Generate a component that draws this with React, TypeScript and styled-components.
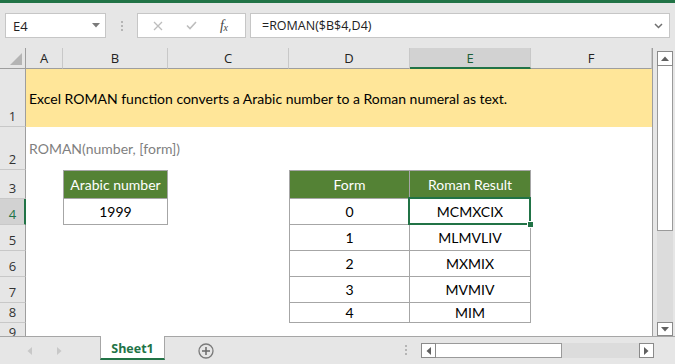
import React from "react";
import styled, { createGlobalStyle, css } from "styled-components";

const UI_FONT = `"Open Sans", "Noto Sans", "Liberation Sans", sans-serif`;
const CELL_FONT = `"Lato", "Liberation Sans", sans-serif`;
const GREEN = "#217346";

const GlobalStyle = createGlobalStyle`
  html, body { margin: 0; padding: 0; }
  body {
    width: 675px;
    height: 364px;
    overflow: hidden;
    background: #e6e6e6;
    font-family: ${UI_FONT};
  }
  * { box-sizing: border-box; }
`;

const Window = styled.div`
  width: 675px;
  height: 364px;
  display: flex;
  flex-direction: column;
  background: #e6e6e6;
  overflow: hidden;
`;

const TitleStripe = styled.div`
  height: 3px;
  flex: none;
  background: ${GREEN};
`;

const FormulaBar = styled.div`
  height: 45px;
  flex: none;
  display: flex;
  align-items: stretch;
  padding: 10px 5px 10px 5px;
`;

const Box = styled.div`
  background: #fff;
  border: 1px solid #c6c6c6;
  display: flex;
  align-items: center;
`;

const NameBox = styled(Box)`
  width: 101px;
  justify-content: space-between;
  padding: 0 5px 0 7px;
  font-size: 13px;
  color: #222;
`;

const BarDivider = styled.div`
  width: 31px;
  display: flex;
  flex-direction: column;
  align-items: center;
  justify-content: center;
  gap: 2px;
`;

const Dot = styled.span`
  width: 2px;
  height: 2px;
  background: #b5b5b5;
`;

const FxBox = styled(Box)`
  width: 109px;
  padding-left: 15px;
`;

const IconSlot = styled.span<{ $w: number }>`
  width: ${(p) => p.$w}px;
  display: flex;
  align-items: center;
  justify-content: flex-start;
`;

const FxLabel = styled.span`
  font-family: "Liberation Serif", "DejaVu Serif", serif;
  font-style: italic;
  font-size: 14px;
  color: #444;
  letter-spacing: -0.5px;
  & > sub {
    font-size: 10px;
    vertical-align: -1px;
  }
`;

const FormulaInput = styled(Box)`
  flex: 1;
  margin-left: 4px;
  padding: 0 6px 0 11px;
  justify-content: space-between;
  font-size: 12.5px;
  color: #222;
`;

const SheetArea = styled.div`
  height: 288px;
  flex: none;
  display: flex;
`;

const SheetGrid = styled.div`
  width: 652px;
  height: 288px;
  overflow: hidden;
  background: #fff;
  display: grid;
  grid-template-columns: 26px 37px 105px 121px 121px 121px 121px;
  grid-template-rows: 21px 58px 43px 29px 26px 26px 26px 26px 20px 20px;
  font-family: ${CELL_FONT};
  font-size: 14px;
  color: #000;
`;

const Corner = styled.div`
  grid-column: 1;
  grid-row: 1;
  background: #e6e6e6;
  border-right: 1px solid #9e9e9e;
  border-bottom: 1px solid #9e9e9e;
  display: flex;
  align-items: flex-end;
  justify-content: flex-end;
  padding: 0 3px 3px 0;
`;

const ColHeader = styled.div<{ $selected?: boolean }>`
  grid-row: 1;
  background: #e6e6e6;
  border-right: 1px solid #c8c8c8;
  border-bottom: 1px solid #9e9e9e;
  display: flex;
  align-items: center;
  justify-content: center;
  font-family: ${UI_FONT};
  font-size: 13px;
  color: #222;
  ${(p) =>
    p.$selected &&
    css`
      background: #d2d2d2;
      border-bottom: 2px solid ${GREEN};
      color: #1b5e37;
      padding-top: 1px;
    `}
`;

const RowHeader = styled.div<{ $selected?: boolean }>`
  grid-column: 1;
  background: #e6e6e6;
  border-right: 1px solid #9e9e9e;
  border-bottom: 1px solid #c8c8c8;
  display: flex;
  align-items: flex-end;
  justify-content: center;
  padding-bottom: 1px;
  font-family: ${UI_FONT};
  font-size: 13px;
  color: #333;
  ${(p) =>
    p.$selected &&
    css`
      background: #d2d2d2;
      border-right: 2px solid ${GREEN};
      color: ${GREEN};
      padding-left: 1px;
    `}
`;

const Banner = styled.div`
  grid-column: 2 / -1;
  grid-row: 2;
  background: #ffe699;
  display: flex;
  align-items: center;
  padding-left: 3px;
  white-space: nowrap;
`;

const Syntax = styled.div`
  grid-column: 2 / -1;
  grid-row: 3;
  display: flex;
  align-items: center;
  padding-left: 3px;
  color: #7f7f7f;
  white-space: nowrap;
`;

const TCell = styled.div<{
  $col: number;
  $row: number;
  $head?: boolean;
  $top?: boolean;
  $left?: boolean;
  $selected?: boolean;
}>`
  grid-column: ${(p) => p.$col};
  grid-row: ${(p) => p.$row};
  position: relative;
  display: flex;
  align-items: center;
  justify-content: center;
  border-right: 1px solid #a6a6a6;
  border-bottom: 1px solid #a6a6a6;
  ${(p) => p.$top && css`border-top: 1px solid #a6a6a6;`}
  ${(p) => p.$left && css`border-left: 1px solid #a6a6a6;`}
  ${(p) =>
    p.$head &&
    css`
      background: #548235;
      color: #fff;
    `}
  ${(p) =>
    p.$selected &&
    css`
      z-index: 2;
      &::before {
        content: "";
        position: absolute;
        left: -2px;
        top: -2px;
        right: -1px;
        bottom: -1px;
        border: 2px solid ${GREEN};
      }
      &::after {
        content: "";
        position: absolute;
        right: -4px;
        bottom: -4px;
        width: 5px;
        height: 5px;
        background: ${GREEN};
        border: 1px solid #fff;
        box-sizing: content-box;
      }
    `}
`;

const VScroll = styled.div`
  width: 23px;
  height: 288px;
  border-left: 1px solid #9e9e9e;
  padding: 3px 2px 0 4px;
  display: flex;
  flex-direction: column;
`;

const ScrollBtn = styled.div<{ $h: number }>`
  flex: none;
  height: ${(p) => p.$h}px;
  width: 16px;
  background: #fff;
  border: 1px solid #8a8a8a;
  display: flex;
  align-items: center;
  justify-content: center;
`;

const HBtn = styled(ScrollBtn)`
  width: 15px;
`;

const VThumb = styled.div`
  flex: none;
  height: 165px;
  background: #fff;
  border: 1px solid #9a9a9a;
  border-top: none;
`;

const Track = styled.div`
  flex: 1;
  background: #dcdcdc;
`;

const TabBar = styled.div`
  flex: 1;
  border-top: 1px solid #a6a6a6;
  display: flex;
  align-items: flex-start;
`;

const TabNav = styled.div`
  width: 100px;
  height: 27px;
  display: flex;
  align-items: center;
  padding-left: 27px;
  gap: 25px;
`;

const SheetTab = styled.div`
  width: 65px;
  height: 24px;
  margin-top: -1px;
  background: #fff;
  border-left: 1px solid #a6a6a6;
  border-right: 1px solid #a6a6a6;
  border-bottom: 2px solid ${GREEN};
  display: flex;
  align-items: center;
  justify-content: center;
  font-weight: 700;
  font-size: 12.5px;
  color: ${GREEN};
  padding-top: 2px;
`;

const AddSheet = styled.div`
  margin: 6px 0 0 33px;
  width: 16px;
  height: 16px;
  display: flex;
`;

const TabDivider = styled.div`
  margin: 8px 0 0 191px;
  width: 2px;
  display: flex;
  flex-direction: column;
  gap: 2px;
`;

const HScroll = styled.div`
  margin: 6px 0 0 14px;
  width: 233px;
  height: 15px;
  display: flex;
`;

const HThumb = styled.div`
  flex: none;
  width: 126px;
  background: #fff;
  border: 1px solid #9a9a9a;
  border-left: none;
`;

const columns = ["A", "B", "C", "D", "E", "F"];
const rows = [1, 2, 3, 4, 5, 6, 7, 8, 9];
const forms = [
  ["0", "MCMXCIX"],
  ["1", "MLMVLIV"],
  ["2", "MXMIX"],
  ["3", "MVMIV"],
  ["4", "MIM"],
];

export default function App() {
  return (
    <>
      <GlobalStyle />
      <Window>
        <TitleStripe />
        <FormulaBar>
          <NameBox>
            <span>E4</span>
            <svg width="8" height="5" viewBox="0 0 8 5">
              <polygon points="0,0 8,0 4,4.5" fill="#7a7a7a" />
            </svg>
          </NameBox>
          <BarDivider>
            <Dot />
            <Dot />
            <Dot />
          </BarDivider>
          <FxBox>
            <IconSlot $w={33}>
              <svg width="10" height="10" viewBox="0 0 10 10">
                <path d="M1 1 L9 9 M9 1 L1 9" stroke="#bdbdbd" strokeWidth="1.3" fill="none" />
              </svg>
            </IconSlot>
            <IconSlot $w={34}>
              <svg width="11" height="9" viewBox="0 0 11 9">
                <path d="M1 4.5 L4 7.5 L10 1" stroke="#bdbdbd" strokeWidth="1.6" fill="none" />
              </svg>
            </IconSlot>
            <FxLabel>
              f<sub>x</sub>
            </FxLabel>
          </FxBox>
          <FormulaInput>
            <span>=ROMAN($B$4,D4)</span>
            <svg width="9" height="6" viewBox="0 0 9 6">
              <path d="M1 1 L4.5 4.5 L8 1" stroke="#6f6f6f" strokeWidth="1.5" fill="none" />
            </svg>
          </FormulaInput>
        </FormulaBar>

        <SheetArea>
          <SheetGrid>
            <Corner>
              <svg width="12" height="12" viewBox="0 0 12 12">
                <polygon points="12,0 12,12 0,12" fill="#b4b4b4" />
              </svg>
            </Corner>
            {columns.map((c) => (
              <ColHeader key={c} $selected={c === "E"}>
                {c}
              </ColHeader>
            ))}
            {rows.map((r) => (
              <RowHeader key={r} $selected={r === 4} style={{ gridRow: r + 1 }}>
                {r}
              </RowHeader>
            ))}
            <Banner>Excel ROMAN function converts a Arabic number to a Roman numeral as text.</Banner>
            <Syntax>ROMAN(number, [form])</Syntax>

            <TCell $col={3} $row={4} $head $top $left>
              Arabic number
            </TCell>
            <TCell $col={3} $row={5} $left>
              1999
            </TCell>

            <TCell $col={5} $row={4} $head $top $left>
              Form
            </TCell>
            <TCell $col={6} $row={4} $head $top>
              Roman Result
            </TCell>
            {forms.map(([f, r], i) => (
              <React.Fragment key={f}>
                <TCell $col={5} $row={5 + i} $left>
                  {f}
                </TCell>
                <TCell $col={6} $row={5 + i} $selected={i === 0}>
                  {r}
                </TCell>
              </React.Fragment>
            ))}
          </SheetGrid>
          <VScroll>
            <ScrollBtn $h={15}>
              <svg width="8" height="5" viewBox="0 0 8 5">
                <polygon points="0,5 8,5 4,0.5" fill="#606060" />
              </svg>
            </ScrollBtn>
            <VThumb />
            <Track />
            <ScrollBtn $h={14}>
              <svg width="8" height="5" viewBox="0 0 8 5">
                <polygon points="0,0 8,0 4,4.5" fill="#606060" />
              </svg>
            </ScrollBtn>
          </VScroll>
        </SheetArea>

        <TabBar>
          <TabNav>
            <svg width="5" height="8" viewBox="0 0 5 8">
              <polygon points="5,0 5,8 0.5,4" fill="#c8c8c8" />
            </svg>
            <svg width="5" height="8" viewBox="0 0 5 8">
              <polygon points="0,0 0,8 4.5,4" fill="#c8c8c8" />
            </svg>
          </TabNav>
          <SheetTab>Sheet1</SheetTab>
          <AddSheet>
            <svg width="16" height="16" viewBox="0 0 16 16">
              <circle cx="8" cy="8" r="7" stroke="#7a7a7a" strokeWidth="1.3" fill="none" />
              <path d="M8 4 V12 M4 8 H12" stroke="#6a6a6a" strokeWidth="1.5" />
            </svg>
          </AddSheet>
          <TabDivider>
            <Dot />
            <Dot />
            <Dot />
          </TabDivider>
          <HScroll>
            <HBtn $h={15}>
              <svg width="5" height="8" viewBox="0 0 5 8">
                <polygon points="5,0 5,8 0.5,4" fill="#606060" />
              </svg>
            </HBtn>
            <HThumb />
            <Track />
            <HBtn $h={15}>
              <svg width="5" height="8" viewBox="0 0 5 8">
                <polygon points="0,0 0,8 4.5,4" fill="#606060" />
              </svg>
            </HBtn>
          </HScroll>
        </TabBar>
      </Window>
    </>
  );
}
